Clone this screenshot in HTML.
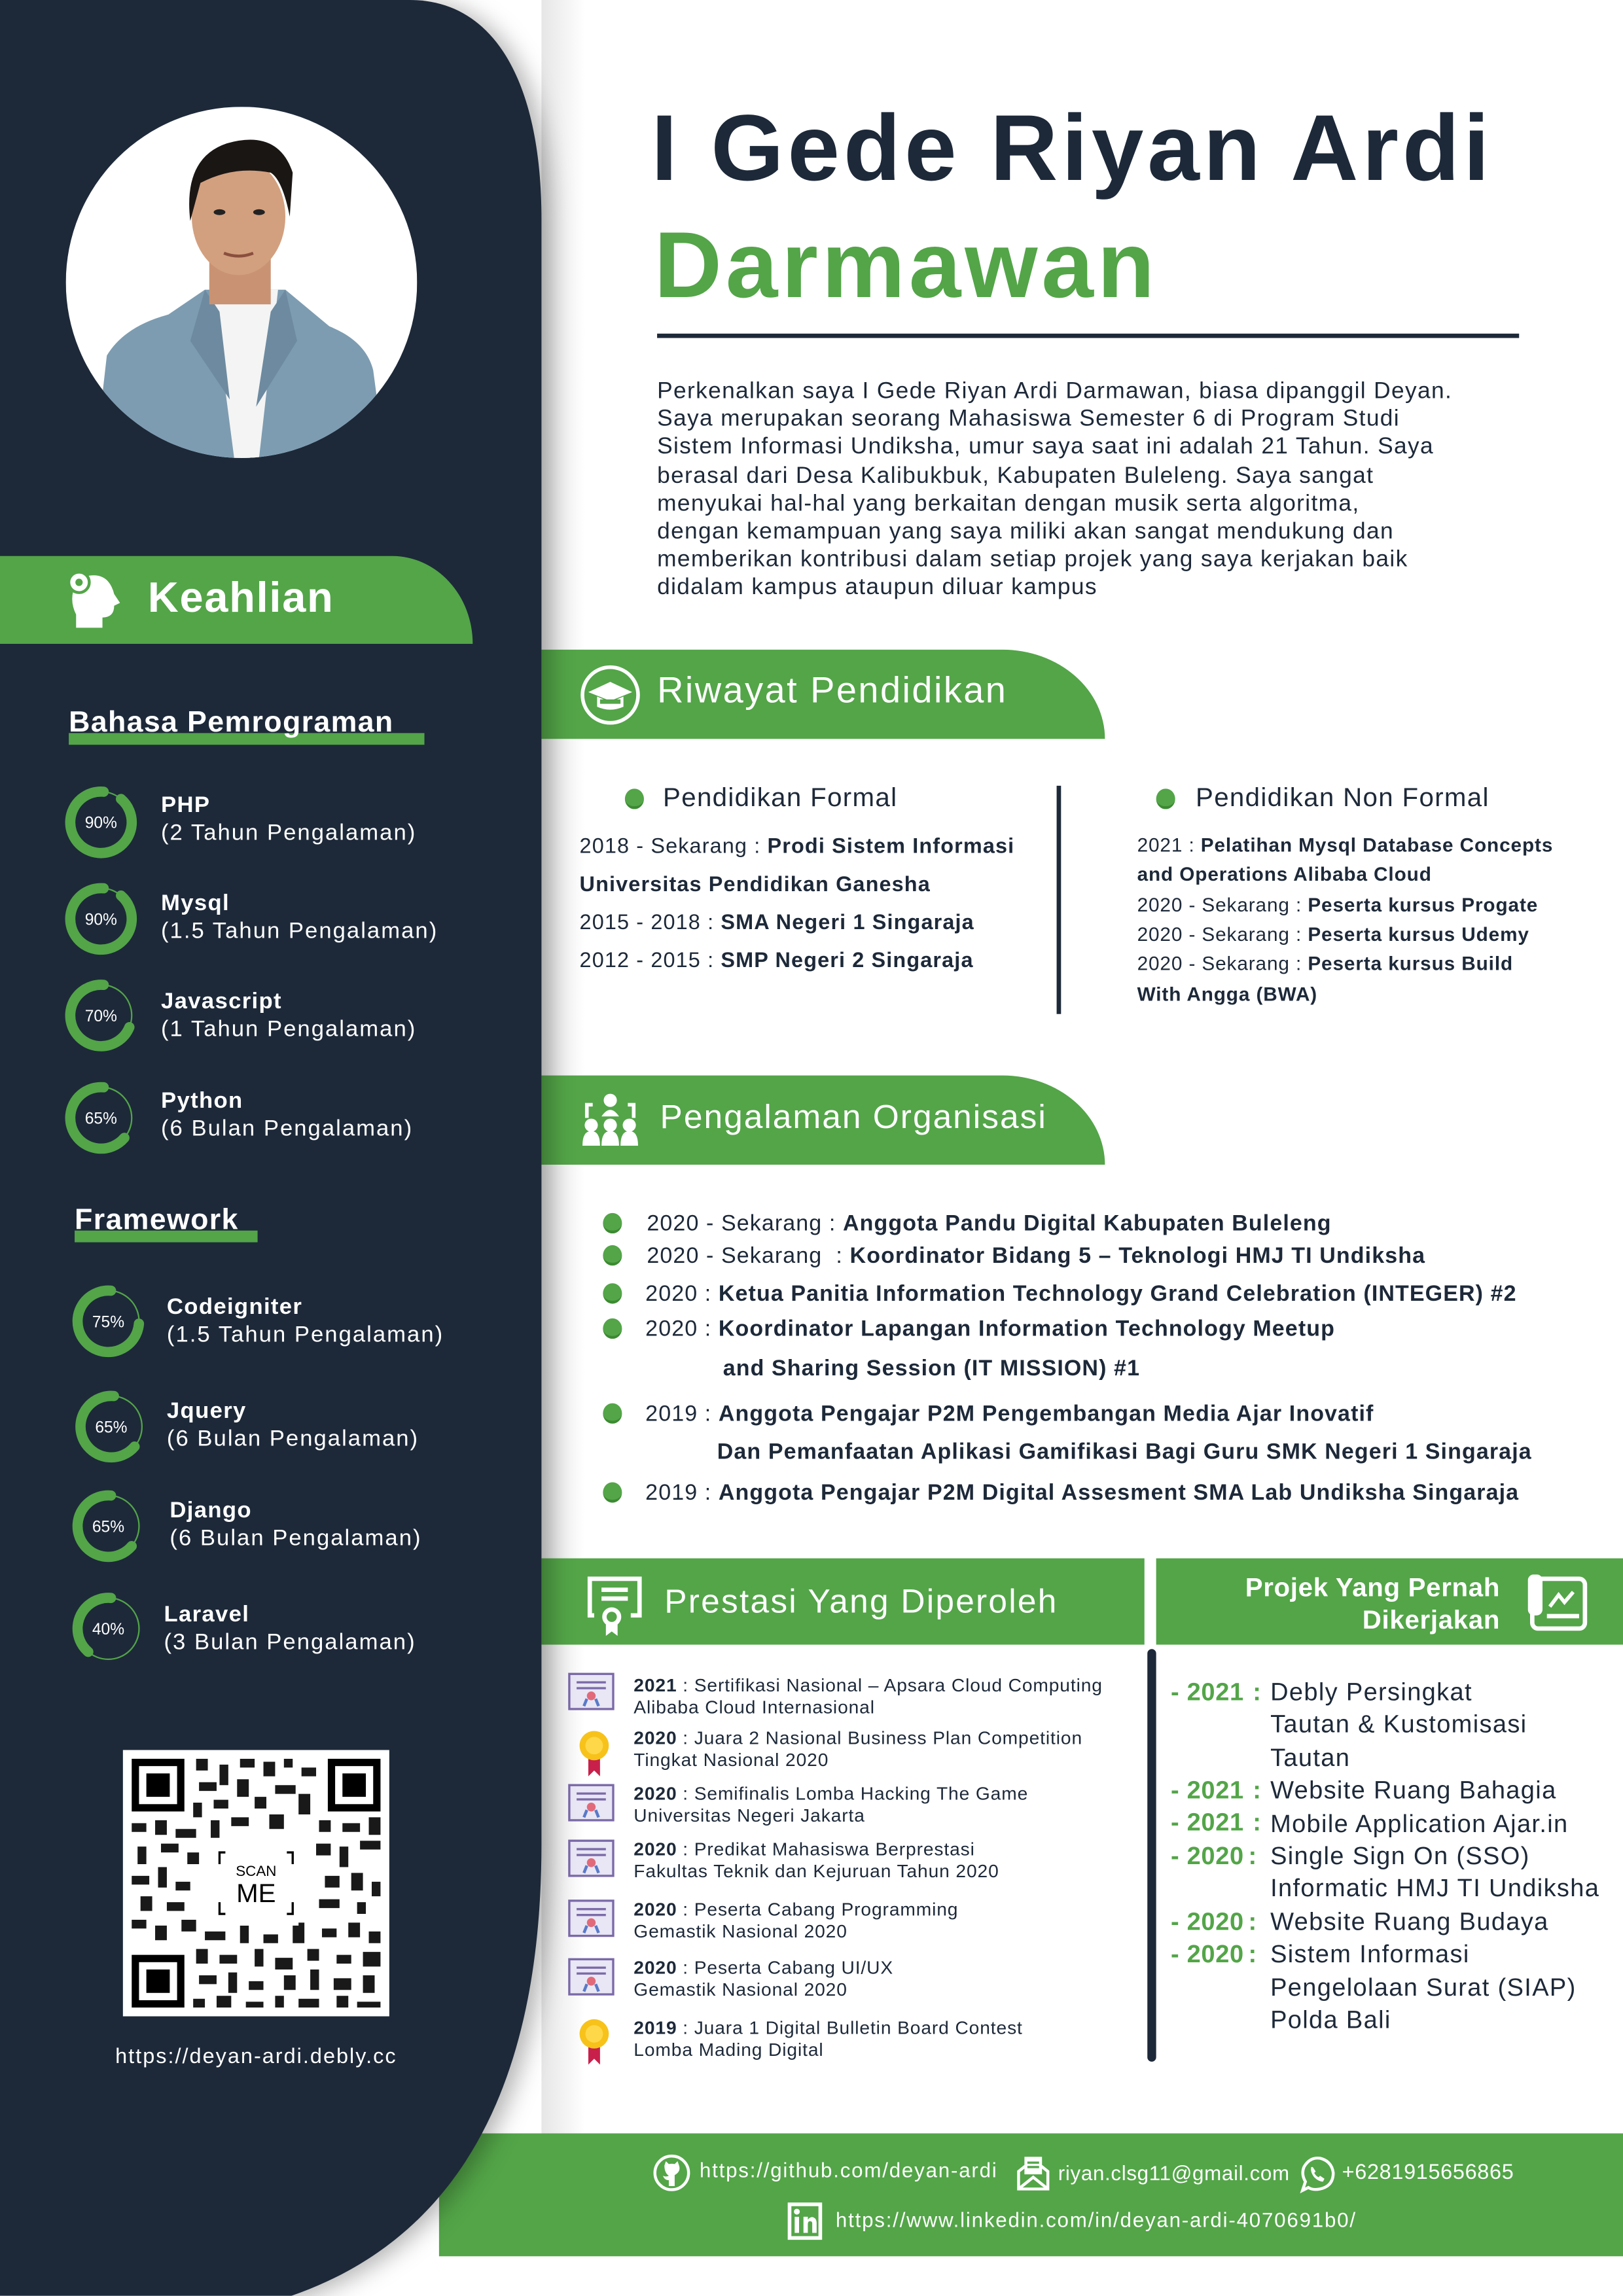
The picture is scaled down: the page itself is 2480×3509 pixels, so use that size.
<!DOCTYPE html>
<html><head><meta charset="utf-8">
<style>
*{margin:0;padding:0;box-sizing:border-box}
html,body{width:2480px;height:3508px;overflow:hidden;background:#fff}
#w{position:absolute;left:0;top:0;width:1109px;height:1569px;transform:scale(2.23625);transform-origin:0 0;font-family:"Liberation Sans",sans-serif;color:#1d2939}
.a{position:absolute;white-space:nowrap}
.g{background:#53a548}
.side{position:absolute;left:0;top:0;width:400px;height:1569px;z-index:2}
.shadow{position:absolute;left:370px;top:0;width:30px;height:1460px;background:linear-gradient(90deg,#e6e6e6,#fff)}
.w{color:#fff}
.sk b{font-size:15.5px;display:block;font-weight:bold;letter-spacing:0.6px}
.sk span{font-size:15.5px;display:block;color:#fff;margin-top:1px;letter-spacing:0.9px}
.sk{color:#fff;line-height:18px}
.hd{font-size:20px;color:#fff;font-weight:bold;letter-spacing:0.6px}
.ban{position:absolute;background:#53a548;color:#fff}
.dot{position:absolute;width:13px;height:14px;border-radius:50%;background:#53a548;border-bottom:2px solid #3c8a32}
.ed{font-size:14.5px;letter-spacing:0.5px}
.nf{font-size:13.3px;letter-spacing:0.4px}
.org{font-size:15.2px;letter-spacing:0.5px}
.pr{font-size:12.6px;line-height:15px;letter-spacing:0.4px}
.pj{font-size:17px;letter-spacing:0.6px}
.pj i{font-style:normal;color:#53a548;font-weight:bold;letter-spacing:0.3px}
</style></head><body><div id="w">
<div class="shadow"></div>
<div class="a g" style="left:300px;top:1458px;width:809px;height:84px"></div>
<div class="side">
 <svg class="a" style="left:0;top:0;filter:drop-shadow(6px 2px 8px rgba(0,0,0,0.3))" width="400" height="1569" viewBox="0 0 400 1569"><path d="M0 0 H280 C340 0 370 60 370 150 V1260 C370 1430 310 1535 190 1572 H0Z" fill="#1d2939"/></svg>
 <svg class="a" style="left:45px;top:73px" width="240" height="240" viewBox="0 0 240 240">
  <defs><clipPath id="c"><circle cx="120" cy="120" r="120"/></clipPath></defs>
  <circle cx="120" cy="120" r="120" fill="#fff"/>
  <g clip-path="url(#c)">
   <path d="M20 240 L28 170 Q40 150 70 142 L95 125 L150 125 L180 150 Q205 160 210 180 L218 240Z" fill="#7d9cb1"/>
   <path d="M100 125 L115 240 L132 240 L145 125Z" fill="#f4f4f4"/>
   <path d="M95 125 L85 160 L112 200 L105 140Z M150 125 L158 160 L130 205 L140 140Z" fill="#6d8aa0"/>
   <rect x="98" y="95" width="42" height="40" fill="#c99373"/>
   <ellipse cx="118" cy="75" rx="32" ry="40" fill="#d2a07f"/>
   <path d="M85 78 Q80 35 110 25 Q145 15 155 45 L153 75 Q148 50 140 45 Q115 40 92 52 Z" fill="#1a1614"/>
   <ellipse cx="105" cy="72" rx="4" ry="2" fill="#222"/><ellipse cx="132" cy="72" rx="4" ry="2" fill="#222"/>
   <path d="M108 100 Q118 104 128 100" stroke="#8a4f3d" stroke-width="2" fill="none"/>
  </g>
 </svg>
 <div class="ban" style="left:0;top:380px;width:323px;height:60px;border-radius:0 55px 0 0/0 60px 0 0"></div>
 <svg class="a" style="left:44px;top:388px" width="40" height="42" viewBox="0 0 40 42"><path d="M14 6 Q30 2 34 18 L38 24 L34 26 Q34 34 26 34 L26 41 L8 41 L8 32 Q4 24 6 16Z" fill="#fff"/><circle cx="10" cy="10" r="7" fill="#fff" stroke="#53a548" stroke-width="2"/><circle cx="10" cy="10" r="2.5" fill="#53a548"/></svg>
 <div class="a w" style="left:101px;top:393px;font-size:29px;font-weight:bold;letter-spacing:0.8px">Keahlian</div>
 <div class="a g" style="left:47px;top:501px;width:243px;height:8px"></div>
 <div class="a hd" style="left:47px;top:483px">Bahasa Pemrograman</div>
 <div class="a g" style="left:51px;top:841px;width:125px;height:8px"></div>
 <div class="a hd" style="left:51px;top:823px">Framework</div>
 <div class="a" style="left:84px;top:1196px;width:182px;height:182px;background:#fff">
  <svg width="182" height="182" viewBox="0 0 182 182">
   <g fill="#000">
    <rect x="6" y="6" width="36" height="36"/><rect x="140" y="6" width="36" height="36"/><rect x="6" y="140" width="36" height="36"/>
   </g>
   <g fill="#fff"><rect x="11" y="11" width="26" height="26"/><rect x="145" y="11" width="26" height="26"/><rect x="11" y="145" width="26" height="26"/></g>
   <g fill="#000"><rect x="16" y="16" width="16" height="16"/><rect x="150" y="16" width="16" height="16"/><rect x="16" y="150" width="16" height="16"/></g>
   <g fill="#000" opacity="0.9">
    <path d="M50 6h8v8h-8zM66 10h6v14h-6zM80 6h10v6h-10zM96 8h8v10h-8zM110 6h6v6h-6zM122 12h10v6h-10zM52 22h12v6h-12zM78 20h8v12h-8zM104 24h14v6h-14zM48 36h6v10h-6zM62 34h10v6h-10zM90 32h8v8h-8zM120 30h8v14h-8zM6 50h10v6h-10zM22 48h8v10h-8zM36 54h14v6h-14zM60 48h6v12h-6zM74 46h12v6h-12zM100 44h10v10h-10zM134 48h8v8h-8zM150 50h12v6h-12zM168 46h8v12h-8zM10 66h6v12h-6zM26 64h12v6h-12zM44 70h8v8h-8zM132 64h10v8h-10zM148 66h6v14h-6zM162 62h14v6h-14zM6 86h12v6h-12zM24 80h6v14h-6zM36 90h10v6h-10zM138 86h10v8h-10zM156 84h8v12h-8zM170 90h6v10h-6zM12 100h8v10h-8zM30 104h12v6h-12zM134 102h14v6h-14zM160 104h6v8h-6zM6 116h10v6h-10zM22 120h8v10h-8zM40 116h10v8h-10zM56 124h14v6h-14zM80 120h6v12h-6zM96 126h10v6h-10zM116 118h8v14h-8zM136 122h10v6h-10zM154 118h8v10h-8zM168 124h8v8h-8zM50 136h8v10h-8zM66 140h12v6h-12zM90 136h6v12h-6zM104 142h12v8h-12zM126 136h8v8h-8zM146 140h10v6h-10zM164 138h12v10h-12zM52 154h12v6h-12zM72 152h6v14h-6zM86 158h10v6h-10zM110 154h8v10h-8zM128 150h6v14h-6zM144 156h12v8h-12zM164 154h8v12h-8zM48 170h8v6h-8zM64 168h10v8h-10zM84 172h12v4h-12zM104 168h6v8h-6zM120 170h14v6h-14zM146 168h8v8h-8zM160 172h16v4h-16z"/>
   </g>
   <rect x="62" y="62" width="58" height="58" fill="#fff"/>
   <path d="M70 70h-4v8M112 70h4v8M70 112h-4v-8M112 112h4v-8" stroke="#000" stroke-width="1.5" fill="none"/>
   <text x="91" y="86" font-size="10" text-anchor="middle" font-family="Liberation Sans">SCAN</text>
   <text x="91" y="104" font-size="18" text-anchor="middle" font-family="Liberation Sans">ME</text>
  </svg>
 </div>
 <div class="a w" style="left:0;width:350px;text-align:center;top:1398px;font-size:14.5px;letter-spacing:0.9px">https://deyan-ardi.debly.cc</div>
</div>

<svg class="a" style="left:0;top:0;z-index:3" width="370" height="1200">
 <g fill="none" stroke="#53a548">
  <g transform="translate(69,562)"><circle r="21" stroke-width="1"/><circle r="21" stroke-width="7" stroke-dasharray="118.7 200" transform="scale(-1,1) rotate(-95)" stroke-linecap="round"/></g>
  <g transform="translate(69,628)"><circle r="21" stroke-width="1"/><circle r="21" stroke-width="7" stroke-dasharray="118.7 200" transform="scale(-1,1) rotate(-95)" stroke-linecap="round"/></g>
  <g transform="translate(69,694)"><circle r="21" stroke-width="1"/><circle r="21" stroke-width="7" stroke-dasharray="92.4 200" transform="scale(-1,1) rotate(-95)" stroke-linecap="round"/></g>
  <g transform="translate(69,764)"><circle r="21" stroke-width="1"/><circle r="21" stroke-width="7" stroke-dasharray="85.8 200" transform="scale(-1,1) rotate(-95)" stroke-linecap="round"/></g>
  <g transform="translate(74,903)"><circle r="21" stroke-width="1"/><circle r="21" stroke-width="7" stroke-dasharray="99 200" transform="scale(-1,1) rotate(-95)" stroke-linecap="round"/></g>
  <g transform="translate(76,975)"><circle r="21" stroke-width="1"/><circle r="21" stroke-width="7" stroke-dasharray="85.8 200" transform="scale(-1,1) rotate(-95)" stroke-linecap="round"/></g>
  <g transform="translate(74,1043)"><circle r="21" stroke-width="1"/><circle r="21" stroke-width="7" stroke-dasharray="85.8 200" transform="scale(-1,1) rotate(-95)" stroke-linecap="round"/></g>
  <g transform="translate(74,1113)"><circle r="21" stroke-width="1"/><circle r="21" stroke-width="7" stroke-dasharray="52.8 200" transform="scale(-1,1) rotate(-95)" stroke-linecap="round"/></g>
 </g>
 <g fill="#fff" font-size="11" font-family="Liberation Sans" text-anchor="middle">
  <text x="69" y="566">90%</text><text x="69" y="632">90%</text><text x="69" y="698">70%</text><text x="69" y="768">65%</text>
  <text x="74" y="907">75%</text><text x="76" y="979">65%</text><text x="74" y="1047">65%</text><text x="74" y="1117">40%</text>
 </g>
</svg>
<div style="position:absolute;z-index:3">
<div class="a sk" style="left:110px;top:542px"><b>PHP</b><span>(2 Tahun Pengalaman)</span></div>
<div class="a sk" style="left:110px;top:609px"><b>Mysql</b><span>(1.5 Tahun Pengalaman)</span></div>
<div class="a sk" style="left:110px;top:676px"><b>Javascript</b><span>(1 Tahun Pengalaman)</span></div>
<div class="a sk" style="left:110px;top:744px"><b>Python</b><span>(6 Bulan Pengalaman)</span></div>
<div class="a sk" style="left:114px;top:885px"><b>Codeigniter</b><span>(1.5 Tahun Pengalaman)</span></div>
<div class="a sk" style="left:114px;top:956px"><b>Jquery</b><span>(6 Bulan Pengalaman)</span></div>
<div class="a sk" style="left:116px;top:1024px"><b>Django</b><span>(6 Bulan Pengalaman)</span></div>
<div class="a sk" style="left:112px;top:1095px"><b>Laravel</b><span>(3 Bulan Pengalaman)</span></div>
</div>

<div class="a" style="left:445px;top:64px;font-size:64px;font-weight:bold;letter-spacing:2.6px">I Gede Riyan Ardi</div>
<div class="a" style="left:447px;top:144px;font-size:64px;font-weight:bold;color:#53a548;letter-spacing:2.6px">Darmawan</div>
<div class="a" style="left:449px;top:228px;width:589px;height:3px;background:#1d2939"></div>
<div class="a" style="left:449px;top:258px;width:620px;font-size:15.8px;line-height:19.2px;letter-spacing:0.6px">Perkenalkan saya I Gede Riyan Ardi Darmawan, biasa dipanggil Deyan.<br>Saya merupakan seorang Mahasiswa Semester 6 di Program Studi<br>Sistem Informasi Undiksha, umur saya saat ini adalah 21 Tahun. Saya<br>berasal dari Desa Kalibukbuk, Kabupaten Buleleng. Saya sangat<br>menyukai hal-hal yang berkaitan dengan musik serta algoritma,<br>dengan kemampuan yang saya miliki akan sangat mendukung dan<br>memberikan kontribusi dalam setiap projek yang saya kerjakan baik<br>didalam kampus ataupun diluar kampus</div>

<div class="ban" style="left:370px;top:444px;width:385px;height:61px;border-radius:0 70px 0 0/0 61px 0 0"></div>
<svg class="a" style="left:396px;top:454px" width="42" height="42" viewBox="0 0 42 42"><circle cx="21" cy="21" r="19" fill="none" stroke="#fff" stroke-width="2.5"/><path d="M6 19 L21 12 L36 19 L21 25Z" fill="#fff"/><path d="M12 22 V29 Q21 33 30 29 V22 L21 26Z" fill="#fff"/><rect x="14" y="24" width="14" height="3" fill="#53a548"/></svg>
<div class="a w" style="left:449px;top:458px;font-size:25px;letter-spacing:1.1px">Riwayat Pendidikan</div>

<div class="dot" style="left:427px;top:539px"></div>
<div class="a" style="left:453px;top:535px;font-size:18px;letter-spacing:0.6px">Pendidikan Formal</div>
<div class="a ed" style="left:396px;top:571px">2018 - Sekarang : <b>Prodi Sistem Informasi</b></div>
<div class="a ed" style="left:396px;top:597px"><b>Universitas Pendidikan Ganesha</b></div>
<div class="a ed" style="left:396px;top:623px">2015 - 2018 : <b>SMA Negeri 1 Singaraja</b></div>
<div class="a ed" style="left:396px;top:649px">2012 - 2015 : <b>SMP Negeri 2 Singaraja</b></div>
<div class="a" style="left:722px;top:537px;width:3px;height:156px;background:#1d2939"></div>
<div class="dot" style="left:790px;top:539px"></div>
<div class="a" style="left:817px;top:535px;font-size:18px;letter-spacing:0.6px">Pendidikan Non Formal</div>
<div class="a nf" style="left:777px;top:570px">2021 : <b>Pelatihan Mysql Database Concepts</b></div>
<div class="a nf" style="left:777px;top:590px"><b>and Operations Alibaba Cloud</b></div>
<div class="a nf" style="left:777px;top:611px">2020 - Sekarang : <b>Peserta kursus Progate</b></div>
<div class="a nf" style="left:777px;top:631px">2020 - Sekarang : <b>Peserta kursus Udemy</b></div>
<div class="a nf" style="left:777px;top:651px">2020 - Sekarang : <b>Peserta kursus Build</b></div>
<div class="a nf" style="left:777px;top:672px"><b>With Angga (BWA)</b></div>

<div class="ban" style="left:370px;top:735px;width:385px;height:61px;border-radius:0 70px 0 0/0 61px 0 0"></div>
<svg class="a" style="left:398px;top:746px" width="38" height="38" viewBox="0 0 38 38"><circle cx="19" cy="6" r="4.5" fill="#fff"/><path d="M13 17 Q19 8 25 17Z" fill="#fff"/><path d="M3 18V9H7M35 18V9H31" stroke="#fff" stroke-width="2.5" fill="none"/><g fill="#fff"><circle cx="6" cy="23" r="4.5"/><circle cx="19" cy="23" r="4.5"/><circle cx="32" cy="23" r="4.5"/><path d="M0 37 Q0 27 6 27 Q12 27 12 37Z M13 37 Q13 27 19 27 Q25 27 25 37Z M26 37 Q26 27 32 27 Q38 27 38 37Z"/></g></svg>
<div class="a w" style="left:451px;top:750px;font-size:23px;letter-spacing:0.9px">Pengalaman Organisasi</div>

<div class="dot" style="left:412px;top:829px"></div>
<div class="a org" style="left:442px;top:828px">2020 - Sekarang : <b>Anggota Pandu Digital Kabupaten Buleleng</b></div>
<div class="dot" style="left:412px;top:851px"></div>
<div class="a org" style="left:442px;top:850px">2020 - Sekarang &nbsp;: <b>Koordinator Bidang 5 – Teknologi HMJ TI Undiksha</b></div>
<div class="dot" style="left:412px;top:877px"></div>
<div class="a org" style="left:441px;top:876px">2020 : <b>Ketua Panitia Information Technology Grand Celebration (INTEGER) #2</b></div>
<div class="dot" style="left:412px;top:901px"></div>
<div class="a org" style="left:441px;top:900px">2020 : <b>Koordinator Lapangan Information Technology Meetup</b></div>
<div class="a org" style="left:494px;top:927px"><b>and Sharing Session (IT MISSION) #1</b></div>
<div class="dot" style="left:412px;top:959px"></div>
<div class="a org" style="left:441px;top:958px">2019 : <b>Anggota Pengajar P2M Pengembangan Media Ajar Inovatif</b></div>
<div class="a org" style="left:490px;top:984px"><b>Dan Pemanfaatan Aplikasi Gamifikasi Bagi Guru SMK Negeri 1 Singaraja</b></div>
<div class="dot" style="left:412px;top:1013px"></div>
<div class="a org" style="left:441px;top:1012px">2019 : <b>Anggota Pengajar P2M Digital Assesment SMA Lab Undiksha Singaraja</b></div>

<div class="ban" style="left:370px;top:1065px;width:412px;height:59px"></div>
<div class="ban" style="left:790px;top:1065px;width:319px;height:59px"></div>
<svg class="a" style="left:400px;top:1076px" width="40" height="44" viewBox="0 0 40 44"><path d="M6 28 H3 V3 H37 V28 H31" stroke="#fff" stroke-width="3" fill="none"/><rect x="11" y="9" width="18" height="3" fill="#fff"/><rect x="11" y="15" width="18" height="3" fill="#fff"/><circle cx="18" cy="29" r="5" fill="none" stroke="#fff" stroke-width="3"/><path d="M14 33 V42 L18 39 L22 42 V33" fill="#fff"/></svg>
<div class="a w" style="left:454px;top:1081px;font-size:23px;letter-spacing:1px">Prestasi Yang Diperoleh</div>
<div class="a w" style="left:800px;top:1074px;width:225px;text-align:right;font-size:18px;font-weight:bold;line-height:22px;letter-spacing:0.3px">Projek Yang Pernah<br>Dikerjakan</div>
<svg class="a" style="left:1044px;top:1076px" width="42" height="40" viewBox="0 0 42 40"><rect x="3" y="3" width="36" height="34" rx="4" fill="none" stroke="#fff" stroke-width="3"/><rect x="0" y="0" width="10" height="28" rx="4" fill="#fff"/><path d="M15 22 L21 14 L25 19 L31 12" stroke="#fff" stroke-width="2.5" fill="none"/><rect x="13" y="27" width="22" height="3" fill="#fff"/></svg>

<svg class="a" style="left:388px;top:1143px" width="36" height="270" viewBox="0 0 36 270">
 <defs>
  <g id="cert"><rect x="1" y="1" width="30" height="24" fill="#e9e6f5" stroke="#7a6aa8" stroke-width="1.5"/><rect x="6" y="6" width="20" height="1.5" fill="#7a6aa8"/><rect x="6" y="10" width="20" height="1.5" fill="#7a6aa8"/><circle cx="16" cy="16" r="3" fill="#e06a7a"/><path d="M13 18 L11 23 M19 18 L21 23" stroke="#5a7ac8" stroke-width="2"/></g>
  <g id="med"><path d="M14 22 L14 34 L18 30 L22 34 L22 22Z" fill="#c8204a"/><circle cx="18" cy="13" r="10" fill="#f7c21a"/><circle cx="18" cy="13" r="6" fill="#ffd84a"/></g>
 </defs>
 <use href="#cert" x="0" y="0"/>
 <use href="#med" x="0" y="37"/>
 <use href="#cert" x="0" y="76"/>
 <use href="#cert" x="0" y="114"/>
 <use href="#cert" x="0" y="155"/>
 <use href="#cert" x="0" y="195"/>
 <use href="#med" x="0" y="234"/>
</svg>
<div class="a pr" style="left:433px;top:1145px"><b>2021</b> : Sertifikasi Nasional – Apsara Cloud Computing<br>Alibaba Cloud Internasional</div>
<div class="a pr" style="left:433px;top:1181px"><b>2020</b> : Juara 2 Nasional Business Plan Competition<br>Tingkat Nasional 2020</div>
<div class="a pr" style="left:433px;top:1219px"><b>2020</b> : Semifinalis Lomba Hacking The Game<br>Universitas Negeri Jakarta</div>
<div class="a pr" style="left:433px;top:1257px"><b>2020</b> : Predikat Mahasiswa Berprestasi<br>Fakultas Teknik dan Kejuruan Tahun 2020</div>
<div class="a pr" style="left:433px;top:1298px"><b>2020</b> : Peserta Cabang Programming<br>Gemastik Nasional 2020</div>
<div class="a pr" style="left:433px;top:1338px"><b>2020</b> : Peserta Cabang UI/UX<br>Gemastik Nasional 2020</div>
<div class="a pr" style="left:433px;top:1379px"><b>2019</b> : Juara 1 Digital Bulletin Board Contest<br>Lomba Mading Digital</div>

<div class="a" style="left:784px;top:1127px;width:6px;height:282px;background:#1d2939;border-radius:3px"></div>

<div class="a pj" style="left:868px;top:1146px;line-height:22.4px">Debly Persingkat<br>Tautan &amp; Kustomisasi<br>Tautan<br>Website Ruang Bahagia<br>Mobile Application Ajar.in<br>Single Sign On (SSO)<br>Informatic HMJ TI Undiksha<br>Website Ruang Budaya<br>Sistem Informasi<br>Pengelolaan Surat (SIAP)<br>Polda Bali</div>
<div class="a pj" style="left:800px;top:1146px;line-height:22.4px"><i>- 2021</i></div>
<div class="a pj" style="left:800px;top:1213px;line-height:22.4px"><i>- 2021</i><br><i>- 2021</i><br><i>- 2020</i><br><br><i>- 2020</i><br><i>- 2020</i></div>
<div class="a pj" style="left:856px;top:1146px;line-height:22.4px"><i>:</i></div>
<div class="a pj" style="left:856px;top:1213px;line-height:22.4px"><i>:</i><br><i>:</i></div>
<div class="a pj" style="left:853px;top:1258px;line-height:22.4px"><i>:</i><br><br><i>:</i><br><i>:</i></div>

<svg class="a" style="left:446px;top:1472px" width="26" height="26" viewBox="0 0 26 26"><circle cx="13" cy="13" r="11.5" fill="none" stroke="#fff" stroke-width="2"/><path d="M8 8 L9 5 L11 7 Q13 6.5 15 7 L17 5 L18 8 Q19 11 17 13 Q16 14 15 14.5 L15 22 L11 22 L11 18 Q8 18 7 15 Q9 16 11 15 Q8 13 8 8Z" fill="#fff"/></svg>
<div class="a w" style="left:478px;top:1475px;font-size:14px;letter-spacing:0.8px">https://github.com/deyan-ardi</div>
<svg class="a" style="left:694px;top:1472px" width="24" height="26" viewBox="0 0 24 26"><path d="M2 12 L12 4 L22 12 V24 H2Z" fill="none" stroke="#fff" stroke-width="2"/><rect x="6" y="2" width="12" height="12" fill="#fff"/><path d="M8 6h8M8 9h8" stroke="#53a548" stroke-width="1.5"/><path d="M2 24 L12 16 L22 24" stroke="#fff" stroke-width="2" fill="none"/></svg>
<div class="a w" style="left:723px;top:1477px;font-size:14px;letter-spacing:0.3px">riyan.clsg11@gmail.com</div>
<svg class="a" style="left:886px;top:1472px" width="28" height="28" viewBox="0 0 28 28"><path d="M4 25 L6 19 Q3 14 5 9 Q9 2 16 3 Q24 5 25 13 Q25 22 16 24 Q11 25 8 23Z" fill="none" stroke="#fff" stroke-width="2"/><path d="M10 9 Q9 12 12 16 Q15 19 18 19 L19 17 L16 15 L15 16 Q13 15 12 13 L13 12 L11 9Z" fill="#fff"/></svg>
<div class="a w" style="left:917px;top:1477px;font-size:14.5px;letter-spacing:0.3px">+6281915656865</div>
<svg class="a" style="left:538px;top:1505px" width="24" height="26" viewBox="0 0 24 26"><rect x="1.5" y="1.5" width="21" height="23" fill="none" stroke="#fff" stroke-width="2.5"/><rect x="5" y="10" width="3" height="11" fill="#fff"/><circle cx="6.5" cy="6.5" r="2" fill="#fff"/><path d="M11 21 V10 H14 V12 Q16 9.5 18 10.5 Q20 11.5 20 14 V21 H17 V14.5 Q17 13 15.5 13 Q14 13 14 15 V21Z" fill="#fff"/></svg>
<div class="a w" style="left:571px;top:1509px;font-size:14px;letter-spacing:0.8px">https://www.linkedin.com/in/deyan-ardi-4070691b0/</div>
</div></body></html>
